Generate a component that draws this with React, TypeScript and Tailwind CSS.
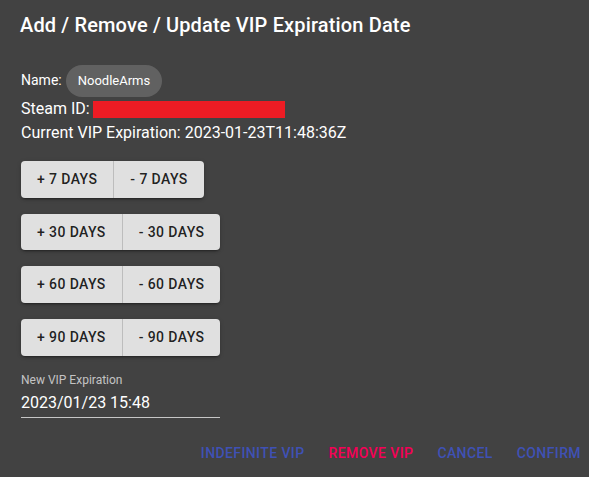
import React from 'react'

const steps = [7, 30, 60, 90]

function DayGroup({ days }: { days: number }) {
  return (
    <div className="flex">
      <div className="inline-flex rounded-[4px] bg-[#e0e0e0] shadow-[0_3px_1px_-2px_rgba(0,0,0,0.2),0_2px_2px_0_rgba(0,0,0,0.14),0_1px_5px_0_rgba(0,0,0,0.12)]">
        <button className="px-4 py-[6px] text-[14px] font-medium uppercase leading-[24.5px] tracking-[0.4px] text-black/[0.87] border-r border-[#bdbdbd]">
          + {days} Days
        </button>
        <button className="px-4 py-[6px] text-[14px] font-medium uppercase leading-[24.5px] tracking-[0.4px] text-black/[0.87]">
          - {days} Days
        </button>
      </div>
    </div>
  )
}

export default function App() {
  return (
    <div className="min-h-screen w-full bg-[#424242] text-white font-['Roboto',sans-serif]">
      <div className="flex flex-col pt-[9px]">
        {/* title */}
        <h2 className="px-5 text-[20px] font-medium leading-[32px] tracking-[0.15px]">
          Add / Remove / Update VIP Expiration Date
        </h2>

        {/* details */}
        <div className="mt-6 flex flex-col px-[21px]">
          <div className="flex items-center">
            <span className="text-[14px] leading-5 -mt-[2px]">Name:</span>
            <span className="ml-1 inline-flex h-8 items-center rounded-full bg-[#616161] px-3 text-[13px]">
              NoodleArms
            </span>
          </div>
          <div className="flex items-center text-[16px] leading-6">
            Steam ID:
            <span className="ml-[3px] inline-block h-[17px] w-[192px] bg-[#ed1c24]" />
          </div>
          <div className="text-[16px] leading-6">Current VIP Expiration: 2023-01-23T11:48:36Z</div>

          {/* day buttons */}
          <div className="mt-4 flex flex-col gap-[16.2px]">
            {steps.map((d) => (
              <DayGroup key={d} days={d} />
            ))}
          </div>

          {/* date field */}
          <div className="mt-[17px] flex w-[199px] flex-col">
            <label className="text-[12px] leading-[14px] text-white/70">New VIP Expiration</label>
            <div className="border-b border-white/70 pt-[6px] pb-[5px] text-[16px] leading-[19px]">
              2023/01/23 15:48
            </div>
          </div>
        </div>

        {/* actions */}
        <div className="mt-[17px] flex justify-end gap-2">
          <button className="px-2 py-[6px] text-[14px] font-medium uppercase leading-[24.5px] tracking-[0.4px] text-[#3f51b5]">
            Indefinite VIP
          </button>
          <button className="px-2 py-[6px] text-[14px] font-medium uppercase leading-[24.5px] tracking-[0.4px] text-[#f50057]">
            Remove VIP
          </button>
          <button className="px-2 py-[6px] text-[14px] font-medium uppercase leading-[24.5px] tracking-[0.4px] text-[#3f51b5]">
            Cancel
          </button>
          <button className="px-2 py-[6px] text-[14px] font-medium uppercase leading-[24.5px] tracking-[0.4px] text-[#3f51b5]">
            Confirm
          </button>
        </div>
      </div>
    </div>
  )
}
